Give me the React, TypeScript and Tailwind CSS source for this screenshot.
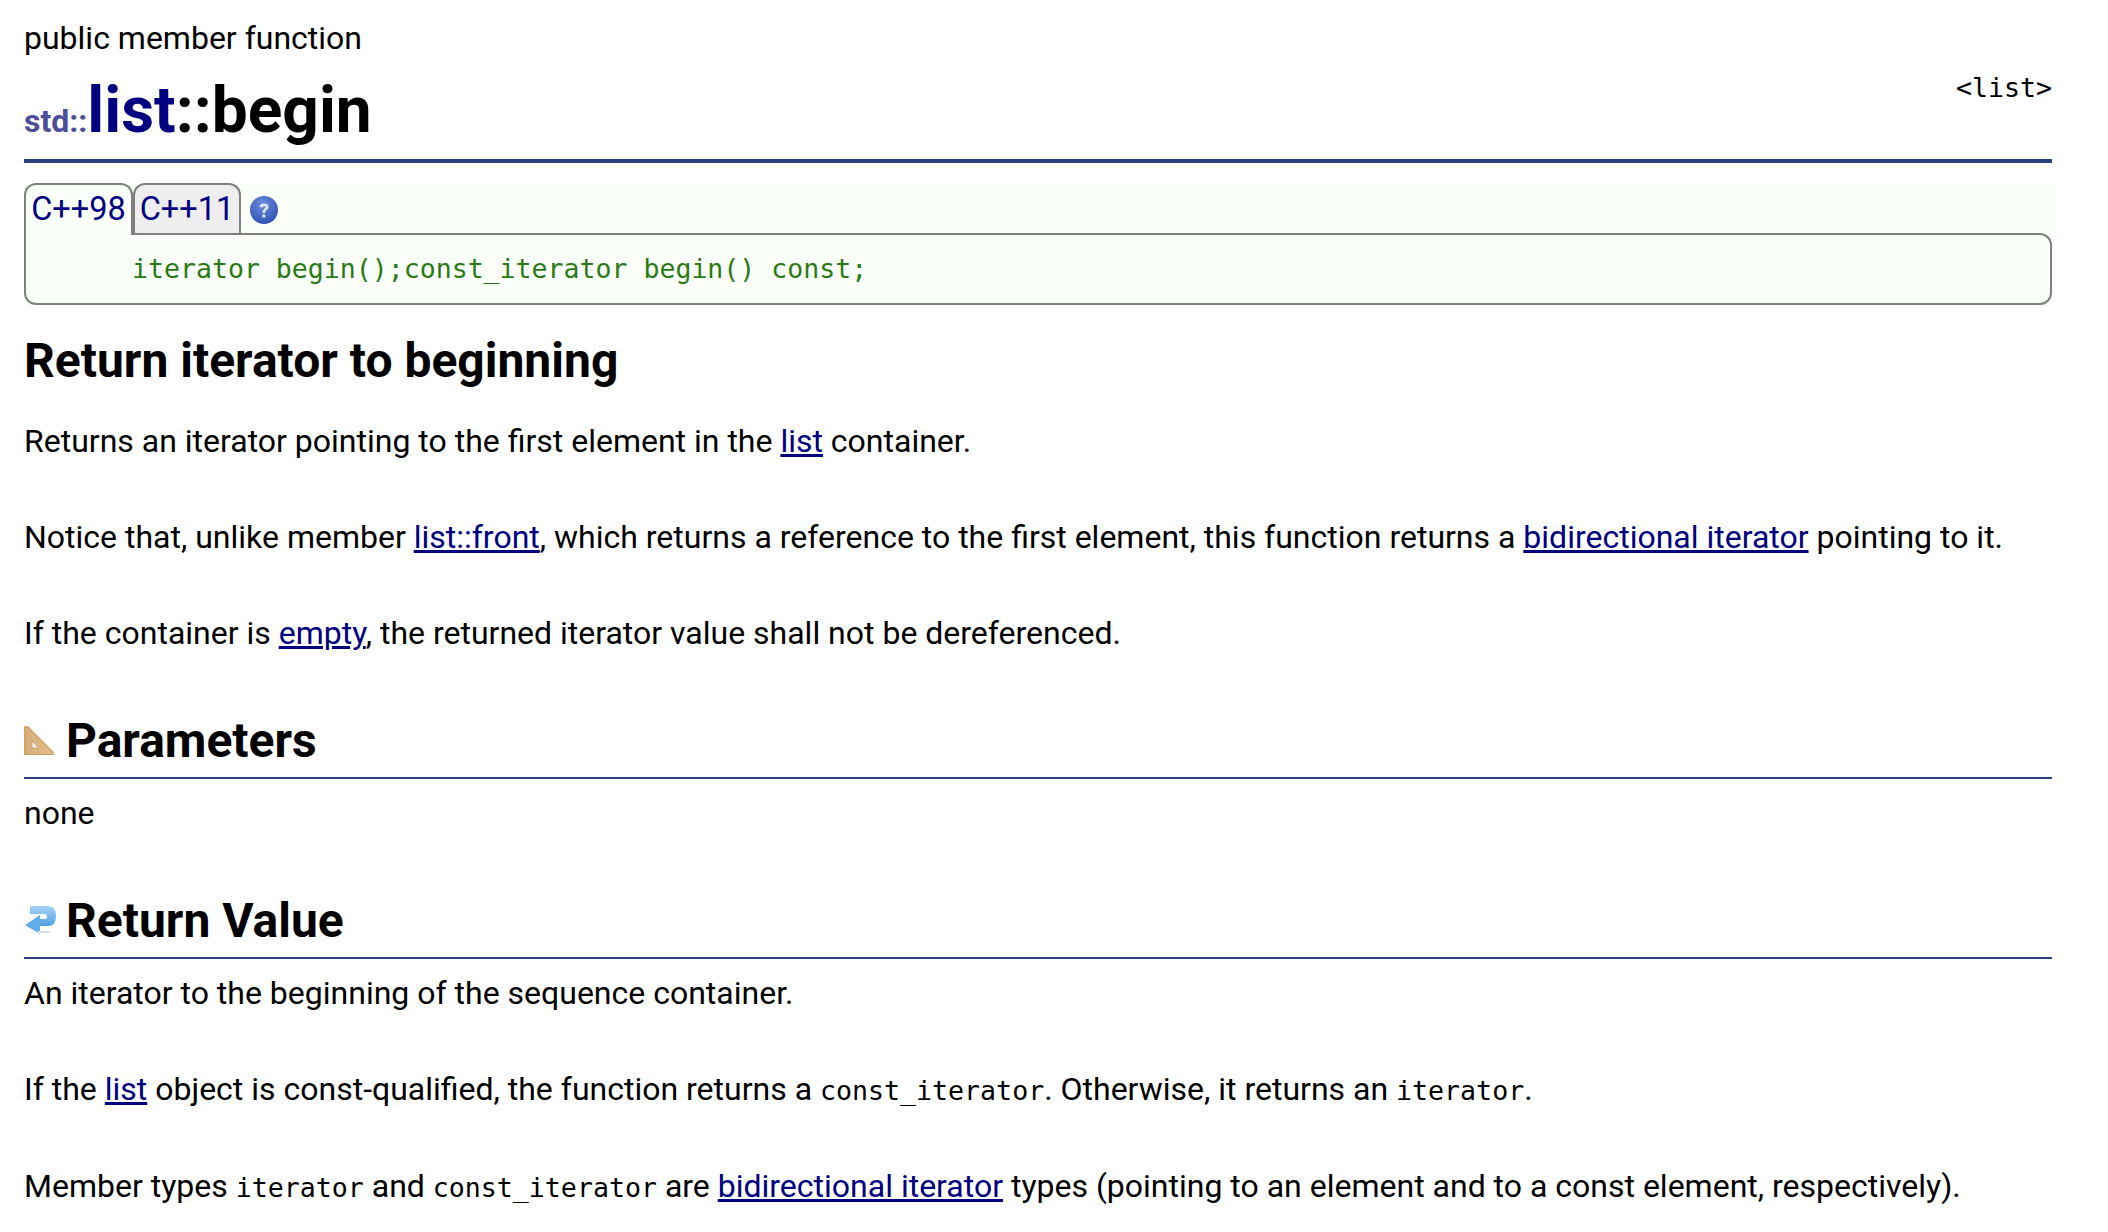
import React from "react";

const A = ({ children }: { children: React.ReactNode }) => (
  <a href="#" className="text-[#000080] underline">{children}</a>
);
const M = ({ children }: { children: React.ReactNode }) => (
  <code className="font-['DejaVu_Sans_Mono',monospace] text-[26.6px]">{children}</code>
);

const Ruler = () => (
  <svg width="32" height="32" viewBox="0 0 32 32" className="shrink-0 mr-[10px]">
    <defs>
      <linearGradient id="rg" x1="0" y1="0" x2="1" y2="0">
        <stop offset="0" stopColor="#d8ae78" />
        <stop offset="1" stopColor="#e2bd8c" />
      </linearGradient>
      <filter id="rb" x="-10%" y="-10%" width="120%" height="120%">
        <feGaussianBlur stdDeviation="0.45" />
      </filter>
    </defs>
    <g filter="url(#rb)">
      <path d="M0 1 L4 1 L30 27 L30 30 L0 30 Z" fill="url(#rg)" />
      <path d="M0 29.5 L30 29.5 M1 2 L1 29 M3 1.5 L29.5 28" stroke="#c9995f" strokeWidth="1" fill="none" />
      <path d="M8 16 L8 23 L15 23 Z" fill="#f6f1ea" stroke="#b98a54" strokeWidth="0.6" />
    </g>
  </svg>
);
const ReturnIcon = () => (
  <svg width="32" height="32" viewBox="0 0 32 32" className="shrink-0 mr-[10px]">
    <defs>
      <linearGradient id="bg" x1="0" y1="0" x2="0" y2="1">
        <stop offset="0" stopColor="#a8d4f6" />
        <stop offset="1" stopColor="#4f9fe6" />
      </linearGradient>
      <filter id="bb" x="-10%" y="-10%" width="120%" height="120%">
        <feGaussianBlur stdDeviation="0.4" />
      </filter>
    </defs>
    <g filter="url(#bb)">
      <path d="M6 1 H24 Q32 1 32 11 Q32 21 24 21 H14 V14 H22 Q24 12 22 9 H6 Z" fill="url(#bg)" />
      <path d="M16 10 V29 L1 20 Z" fill="#62adeb" />
      <path d="M14 27 L26 27" stroke="#d6e2ec" strokeWidth="2" />
    </g>
  </svg>
);
const Help = () => (
  <svg width="30" height="30" viewBox="0 0 30 30" className="ml-[8px] mt-[13px]">
    <defs>
      <radialGradient id="hg" cx="0.45" cy="0.3" r="0.8">
        <stop offset="0" stopColor="#6f8ee0" />
        <stop offset="1" stopColor="#2548aa" />
      </radialGradient>
    </defs>
    <circle cx="15" cy="14" r="14" fill="url(#hg)" />
    <path d="M10.5 11 Q11 7.5 15 7.5 Q19.5 7.5 19.5 11 Q19.5 13 17 14.5 Q16 15.2 16 17 H13.5 Q13.3 14.5 15 13 Q16.5 12 16.5 11 Q16.5 10 15 10 Q13.7 10 13.5 11.5 Z" fill="#dfe6f6" />
    <rect x="13.3" y="18.5" width="3" height="3" fill="#dfe6f6" />
  </svg>
);

const Section = ({ icon, title }: { icon: React.ReactNode; title: string }) => (
  <div className="flex items-center h-[46px] border-b-2 border-[#2a3f7e] box-content pb-[13px]">
    {icon}
    <h3 className="text-[48px] leading-[46px] font-bold">{title}</h3>
  </div>
);

export default function App() {
  return (
    <div className="font-['Roboto',sans-serif] text-[32px] leading-[38px] text-black bg-white pl-[24px] pr-[56px] w-[2108px] h-[1232px] overflow-hidden">
      <div className="pt-[19px] h-[58px]">public member function</div>
      <div className="relative h-[101px] border-b-[4px] border-[#2a3f7e] box-content">
        <h1 className="font-bold text-[64px] leading-[76px] pt-[15px]">
          <span className="text-[32px] text-[#4d4d9c]">std::</span>
          <span className="text-[#000080]">list</span>::begin
        </h1>
        <div className="absolute right-0 top-[14px] font-['DejaVu_Sans_Mono',monospace] text-[26.6px] leading-[32px]">&lt;list&gt;</div>
      </div>
      <div className="mt-[20px] bg-[#fafffa]">
        <div className="flex h-[50px]">
          <div className="w-[109px] h-[52px] -mb-[2px] relative z-10 border-2 border-b-0 border-[#808080] rounded-t-[12px] bg-[#fafffa] text-[#000080] text-[32.5px] leading-[48px] text-center">C++98</div>
          <div className="w-[108px] h-[50px] border-2 border-b-0 border-[#808080] rounded-t-[12px] bg-[#eeeeee] text-[#000080] text-[32.5px] leading-[48px] text-center">C++11</div>
          <Help />
        </div>
        <div className="h-[72px] border-2 border-[#808080] rounded-b-[12px] rounded-tr-[12px] pl-[106px] pt-[16px] text-[#2a7a14] font-['DejaVu_Sans_Mono',monospace] text-[26.55px] leading-[36px]">
          iterator begin();const_iterator begin() const;
        </div>
      </div>
      <h2 className="mt-[30px] text-[48px] leading-[52px] font-bold">Return iterator to beginning</h2>
      <p className="mt-[35px]">Returns an iterator pointing to the first element in the <A>list</A> container.</p>
      <p className="mt-[58px]">Notice that, unlike member <A>list::front</A>, which returns a reference to the first element, this function returns a <A>bidirectional iterator</A> pointing to it.</p>
      <p className="mt-[58px]">If the container is <A>empty</A>, the returned iterator value shall not be dereferenced.</p>
      <div className="mt-[66px]"><Section icon={<Ruler />} title="Parameters" /></div>
      <p className="mt-[15px]">none</p>
      <div className="mt-[66px]"><Section icon={<ReturnIcon />} title="Return Value" /></div>
      <p className="mt-[15px]">An iterator to the beginning of the sequence container.</p>
      <p className="mt-[58px]">If the <A>list</A> object is const-qualified, the function returns a <M>const_iterator</M>. Otherwise, it returns an <M>iterator</M>.</p>
      <p className="mt-[57px]">Member types <M>iterator</M> and <M>const_iterator</M> are <A>bidirectional iterator</A> types (pointing to an element and to a const element, respectively).</p>
    </div>
  );
}
